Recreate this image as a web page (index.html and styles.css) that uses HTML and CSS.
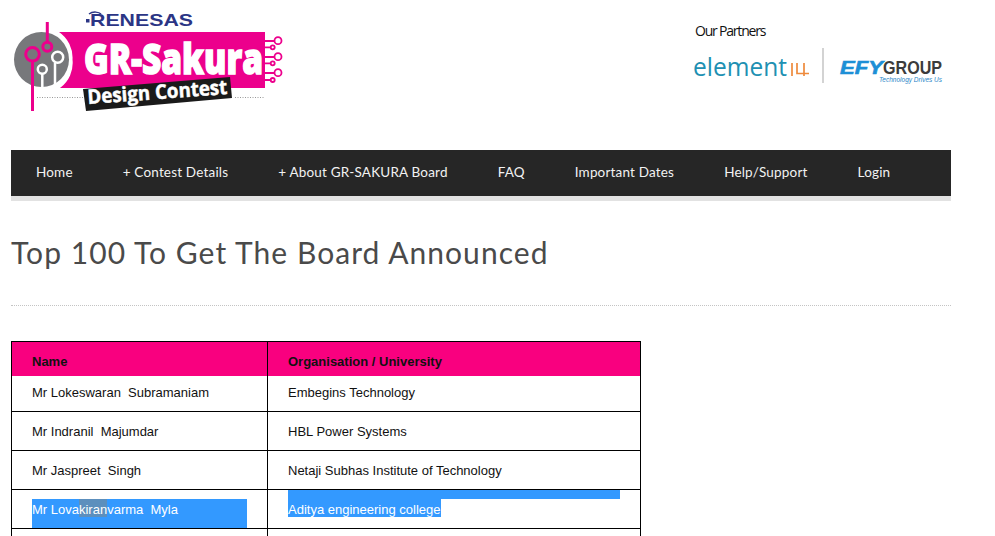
FILE: index.html
```html
<!DOCTYPE html>
<html lang="en">
<head>
<meta charset="utf-8">
<title>Top 100 To Get The Board Announced</title>
<link rel="stylesheet" href="styles.css">
</head>
<body>
<div class="page">
  <header class="masthead">
    <svg class="logo" width="280" height="125" viewBox="11 0 280 125" role="img" aria-label="GR-Sakura Design Contest">
      <rect x="86" y="19" width="3.500" height="3.500" fill="#2b3585"/>
      <path d="M89 14C93 11 99 12 101 14" fill="none" stroke="#2b3585" stroke-width="1.500"/>
      <text x="90" y="26" class="renesas" textLength="103" lengthAdjust="spacingAndGlyphs">RENESAS</text>
      <path d="M59 32H265V88H60A31 31 0 0 0 72.500 59.500A31 31 0 0 0 59 32Z" fill="#ec008c"/>
      <circle cx="41.500" cy="59.500" r="27.500" fill="#77787b"/>
      <g fill="none" stroke="#ec008c" stroke-width="3">
        <path d="M47.300 22V42"/>
        <circle cx="47.300" cy="46.700" r="4.500"/>
        <circle cx="32.500" cy="54.300" r="6.800"/>
        <path d="M32.500 61V111"/>
      </g>
      <g fill="none" stroke="#fff" stroke-width="2.500">
        <circle cx="57.700" cy="57.300" r="5.500"/>
        <path d="M55 63V85"/>
        <circle cx="42.300" cy="69.300" r="4.500"/>
        <path d="M42.300 74V87"/>
      </g>
      <g fill="none" stroke="#ec008c" stroke-width="1.800">
        <path d="M265 41H274.500M265 47.300H271M265 57H274.500M265 63.300H271M265 73H274.500M265 80H271"/>
        <circle cx="278" cy="40.700" r="3.500"/>
        <circle cx="272.700" cy="47.300" r="2"/>
        <circle cx="278" cy="56.700" r="3.500"/>
        <circle cx="272.700" cy="63.300" r="2"/>
        <circle cx="278" cy="72.700" r="3.500"/>
        <circle cx="272.700" cy="80" r="2"/>
      </g>
      <path d="M37 97.500H83M235 97.500H265" stroke="#999" stroke-dasharray="1 1.500" fill="none"/>
      <text x="84" y="73.500" class="sakura" textLength="179" lengthAdjust="spacingAndGlyphs">GR-Sakura</text>
      <path d="M83 89L230 77L232 98L86 111Z" fill="#1a1a1a"/>
      <text x="88" y="104" class="design" transform="rotate(-4.100 88 104)" textLength="140" lengthAdjust="spacingAndGlyphs">Design Contest</text>
    </svg>
    <svg class="partners" width="271" height="90" viewBox="680 10 271 90" role="img" aria-label="Our Partners">
      <text x="695" y="36" class="our">Our Partners</text>
      <text x="693" y="76" class="element" textLength="94" lengthAdjust="spacingAndGlyphs">element</text>
      <path d="M792 63V76M797 63V73.500H809M804 63V76" fill="none" stroke="#ee8a3c" stroke-width="1.700"/>
      <path d="M823 48V83" stroke="#c4c4c4" stroke-width="1.500"/>
      <text x="840" y="73.500" class="efy" textLength="43" lengthAdjust="spacingAndGlyphs">EFY</text>
      <text x="883" y="74" class="group" textLength="59" lengthAdjust="spacingAndGlyphs">GROUP</text>
      <text x="879" y="81.500" class="tag" textLength="63" lengthAdjust="spacingAndGlyphs">Technology Drives Us</text>
    </svg>
  </header>

  <nav class="nav">
    <a class="nav-item" href="#">Home</a>
    <a class="nav-item" href="#">+ Contest Details</a>
    <a class="nav-item" href="#">+ About GR-SAKURA Board</a>
    <a class="nav-item" href="#">FAQ</a>
    <a class="nav-item" href="#">Important Dates</a>
    <a class="nav-item" href="#">Help/Support</a>
    <a class="nav-item" href="#">Login</a>
  </nav>

  <h1 class="title">Top 100 To Get The Board Announced</h1>

  <table class="list">
    <thead>
      <tr><th>Name</th><th>Organisation / University</th></tr>
    </thead>
    <tbody>
      <tr class="first"><td>Mr Lokeswaran&nbsp; Subramaniam</td><td>Embegins Technology</td></tr>
      <tr><td>Mr Indranil&nbsp; Majumdar</td><td>HBL Power Systems</td></tr>
      <tr><td>Mr Jaspreet&nbsp; Singh</td><td>Netaji Subhas Institute of Technology</td></tr>
      <tr class="selected">
        <td><div class="sel-block">Mr Lova<span class="sel-dark">kiran</span>varma&nbsp; Myla</div></td>
        <td><div class="sel-strip"></div><span class="sel-text">Aditya engineering college</span></td>
      </tr>
      <tr><td>&nbsp;</td><td>&nbsp;</td></tr>
    </tbody>
  </table>
</div>
</body>
</html>
```

FILE: styles.css
```css
html {
  overflow: hidden;
}
body {
  margin: 0;
  background: #fff;
}
.page {
  width: 940px;
  margin-left: 11px;
}
.masthead {
  height: 150px;
  display: flex;
  justify-content: space-between;
  align-items: flex-start;
}
.logo, .partners {
  display: block;
}
.partners {
  margin-top: 10px;
}
.renesas {
  font: 700 17px "Liberation Sans", sans-serif;
  fill: #2b3585;
}
.sakura {
  font: 800 43px "Open Sans", sans-serif;
  fill: #fff;
  stroke: #fff;
  stroke-width: 1.500px;
}
.design {
  font: 700 20px "Open Sans", sans-serif;
  fill: #fff;
  stroke: #fff;
  stroke-width: 0.500px;
}
.our {
  font: 400 14px "Open Sans", sans-serif;
  letter-spacing: -1.200px;
  fill: #111;
}
.element {
  font: 400 25px "Open Sans", sans-serif;
  fill: #2090b2;
}
.efy {
  font: italic 700 18px "Liberation Sans", sans-serif;
  fill: #1d8fd6;
  stroke: #1d8fd6;
  stroke-width: 0.600px;
}
.group {
  font: 700 18px "Liberation Sans", sans-serif;
  fill: #3c3c3c;
}
.tag {
  font: italic 400 7px "Liberation Sans", sans-serif;
  fill: #2a86c8;
}
.nav {
  display: flex;
  box-sizing: border-box;
  height: 51px;
  align-items: center;
  padding: 0 0 2px 25px;
  gap: 50px;
  background: #262626;
  background-clip: padding-box;
  border-bottom: 5px solid #e2e2e2;
}
.nav-item {
  font: 400 13.500px "Lato", sans-serif;
  letter-spacing: 0.180px;
  color: #f2f2f2;
  text-decoration: none;
}
.title {
  margin: 0;
  height: 105px;
  box-sizing: border-box;
  padding-top: 33px;
  font: 400 30px/36px "Lato", sans-serif;
  letter-spacing: 1.050px;
  color: #4a4a4a;
  border-bottom: 1px dotted #c4c4c4;
}
.list {
  margin-top: 35px;
  width: 630px;
  table-layout: fixed;
  border-collapse: collapse;
  font: 400 13px/18px "Liberation Sans", sans-serif;
  color: #111;
}
.list th:first-child, .list td:first-child {
  width: 256px;
}
.list th, .list td {
  padding: 2px 20px 0;
  box-sizing: border-box;
  border: 1px solid #000;
  text-align: left;
  height: 39px;
}
.list th {
  height: 34px;
  padding-top: 6px;
  font-weight: 700;
  background: #f9007f;
  border-bottom: 0;
}
.first td {
  height: 36px;
  padding-top: 0;
  padding-bottom: 1px;
  border-top: 0;
}
.selected td {
  vertical-align: top;
  padding-top: 0;
}
.sel-block {
  margin-top: 9px;
  height: 29px;
  width: 215px;
  line-height: 21px;
  background: #3399ff;
  color: #fff;
}
.sel-dark {
  display: inline-block;
  height: 18px;
  line-height: 21px;
  background: #5c8fbd;
}
.sel-strip {
  margin-top: -1px;
  height: 10px;
  width: 332px;
  background: #3399ff;
}
.sel-text {
  display: inline-block;
  height: 18px;
  line-height: 21px;
  background: #3399ff;
  color: #fff;
}
```
